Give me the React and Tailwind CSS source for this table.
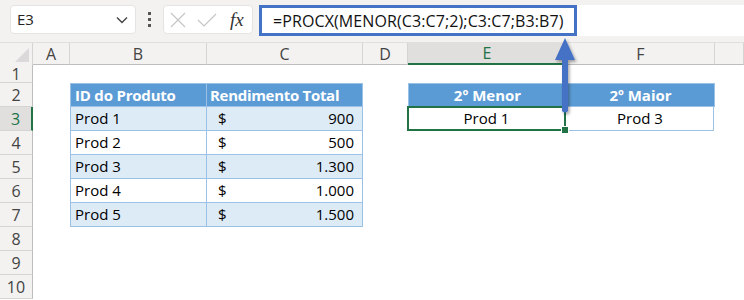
import React from 'react';

const cols = [
  { key: 'A', w: 'w-[37px]' },
  { key: 'B', w: 'w-[137px]' },
  { key: 'C', w: 'w-[156px]' },
  { key: 'D', w: 'w-[45px]' },
  { key: 'E', w: 'w-[159px]' },
  { key: 'F', w: 'w-[148px]' },
  { key: 'G', w: 'flex-1' },
];

const products = [
  { id: 'Prod 1', total: '900' },
  { id: 'Prod 2', total: '500' },
  { id: 'Prod 3', total: '1.300' },
  { id: 'Prod 4', total: '1.000' },
  { id: 'Prod 5', total: '1.500' },
];

const FormulaBar = () => (
  <div className="h-[43px] bg-[#f3f2f1] flex items-start pt-[5px] border-b border-[#e1dfdd]">
    <div className="ml-[10px] w-[126px] h-[29px] bg-white rounded-[4px] border border-[#e6e4e2] flex items-center justify-between px-[6px]">
      <span className="text-[15px] text-[#222]">E3</span>
      <svg width="12" height="8" viewBox="0 0 12 8" className="mr-[1px]">
        <path d="M1 1.5 L6 6.5 L11 1.5" fill="none" stroke="#444" strokeWidth="1.4" />
      </svg>
    </div>
    <div className="w-[27px] h-[29px] flex flex-col items-center justify-center gap-[3px]">
      <span className="w-[3px] h-[3px] bg-[#555]" />
      <span className="w-[3px] h-[3px] bg-[#555]" />
      <span className="w-[3px] h-[3px] bg-[#555]" />
    </div>
    <div className="w-[90px] h-[29px] bg-white rounded-[4px] border border-[#e6e4e2] flex items-center pl-[6px]">
      <svg width="16" height="16" viewBox="0 0 16 16">
        <path d="M1 1 L15 15 M15 1 L1 15" stroke="#c8c6c4" strokeWidth="1.2" />
      </svg>
      <svg width="20" height="16" viewBox="0 0 20 16" className="ml-[11px]">
        <path d="M1 8 L7 14 L19 2" fill="none" stroke="#c8c6c4" strokeWidth="1.2" />
      </svg>
      <span className="ml-[13px] text-[19px] italic text-[#333] leading-none font-['Liberation_Serif',serif]">fx</span>
    </div>
    <div className="ml-[6px] flex-1 h-[31px] flex bg-white">
      <div className="w-[318px] h-full border-[3px] border-[#4472c4] flex items-center pl-[11px] text-[16px] text-[#111] tracking-[0.1px]">
        =PROCX(MENOR(C3:C7;2);C3:C7;B3:B7)
      </div>
    </div>
  </div>
);

const ColumnHeaders = () => (
  <div className="flex h-[22px] bg-[#f3f2f1] text-[16px] text-[#444]">
    <div className="w-[33px] border-r border-[#d4d4d4] relative">
      <div className="absolute right-[3px] bottom-[3px] w-0 h-0 border-l-[14px] border-l-transparent border-b-[14px] border-b-[#dadada]" />
    </div>
    {cols.map((c) => (
      <div
        key={c.key}
        className={`${c.w} flex items-center justify-center border-r ${
          c.key === 'E'
            ? 'bg-[#e1dfdd] text-[#217346] border-b-2 border-b-[#217346] border-r-[#d4d4d4]'
            : 'border-[#d4d4d4] border-b border-b-[#bdbdbd]'
        }`}
      >
        {c.key === 'G' ? '' : c.key}
      </div>
    ))}
  </div>
);

const RowHeader = ({ n, h }) => (
  <div
    className={`w-[33px] ${h} flex items-center justify-center text-[16px] border-b ${
      n === 3
        ? 'bg-[#e1dfdd] text-[#217346] border-r-2 border-r-[#217346] border-b-[#d4d4d4]'
        : 'bg-[#f3f2f1] text-[#444] border-r border-r-[#bdbdbd] border-b-[#d4d4d4]'
    }`}
  >
    {n}
  </div>
);

const Row = ({ n, h = 'h-[24px]', children }) => (
  <div className={`flex ${h}`}>
    <RowHeader n={n} h={h} />
    {children}
  </div>
);

export default function App() {
  return (
    <div className="w-[744px] h-[300px] overflow-hidden bg-white relative font-['Open_Sans',sans-serif]">
      <FormulaBar />
      <ColumnHeaders />

      <Row n={1} h="h-[18px]" />

      <Row n={2}>
        <div className="w-[37px]" />
        <div className="w-[137px] bg-[#5b9bd5] text-white font-bold text-[15px] flex items-center pl-[4px] border border-[#9bc2e6] tracking-[-0.2px]">
          ID do Produto
        </div>
        <div className="w-[156px] bg-[#5b9bd5] text-white font-bold text-[15px] flex items-center pl-[3px] border-y border-r border-[#9bc2e6] tracking-[-0.3px]">
          Rendimento Total
        </div>
        <div className="w-[45px]" />
        <div className="w-[159px] bg-[#5b9bd5] text-white font-bold text-[15px] flex items-center justify-center border border-[#9bc2e6]">
          2º Menor
        </div>
        <div className="w-[148px] bg-[#5b9bd5] text-white font-bold text-[15px] flex items-center justify-center border-y border-r border-[#9bc2e6]">
          2º Maior
        </div>
      </Row>

      {products.map((p, i) => {
        const band = i % 2 === 0 ? 'bg-[#ddebf7]' : 'bg-white';
        return (
          <Row key={p.id} n={i + 3}>
            <div className="w-[37px]" />
            <div className={`w-[137px] ${band} text-[15px] text-black flex items-center pl-[4px] border-x border-b border-[#9bc2e6]`}>
              {p.id}
            </div>
            <div className={`w-[156px] ${band} text-[15px] text-black flex items-center justify-between pl-[11px] pr-[8px] border-r border-b border-[#9bc2e6]`}>
              <span>$</span>
              <span>{p.total}</span>
            </div>
            {i === 0 && (
              <>
                <div className="w-[45px]" />
                <div className="w-[159px] relative text-[15px] text-black flex items-center justify-center border-2 border-[#217346] -mt-px ml-[-1px] mr-[1px]">
                  Prod 1
                  <span className="absolute right-[-4px] bottom-[-4px] w-[6px] h-[6px] bg-[#217346] border border-white box-content -m-px" />
                </div>
                <div className="w-[147px] text-[15px] text-black flex items-center justify-center border-r border-b border-[#9bc2e6]">
                  Prod 3
                </div>
              </>
            )}
          </Row>
        );
      })}

      <Row n={8} />
      <Row n={9} />
      <Row n={10} />

      {/* pointer from the result cell up to the formula */}
      <svg className="absolute left-[548px] top-[34px]" width="34" height="86" viewBox="0 0 34 86">
        <defs>
          <filter id="sh" x="-50%" y="-20%" width="200%" height="140%">
            <feDropShadow dx="1.5" dy="2" stdDeviation="1.5" floodColor="#000" floodOpacity="0.35" />
          </filter>
        </defs>
        <g filter="url(#sh)">
          <path d="M17 4 L27 26 L20 26 L20 77 Q17 80 14 77 L14 26 L7 26 Z" fill="#4472c4" />
        </g>
      </svg>
    </div>
  );
}
